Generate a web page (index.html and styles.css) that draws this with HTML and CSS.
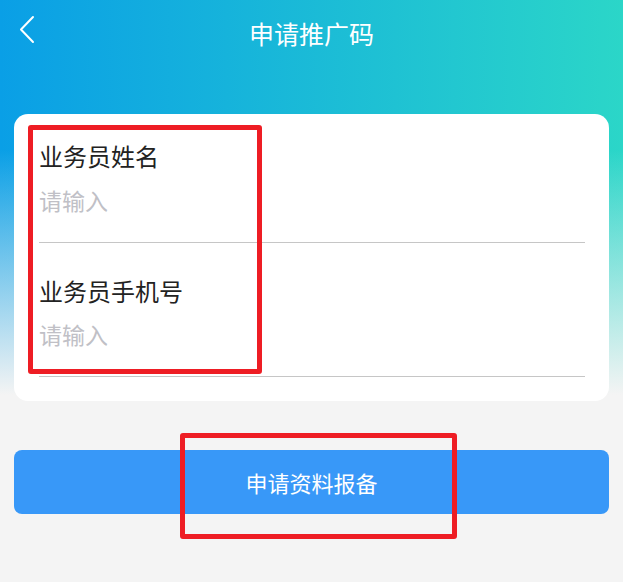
FILE: index.html
```html
<!DOCTYPE html>
<html>
   <head>
      <meta charset="utf-8">
      <meta name="viewport" content="width=device-width, initial-scale=1">
      <title>申请推广码</title>
      <link rel="stylesheet" href="styles.css">
   </head>
   <body>
      <div class="page">

         <!--
         Navigation bar
         -->
         <div class="navbar">
            <a class="back" href="#">
               <svg width="20" height="30" viewBox="0 0 20 30">
                  <path d="M15,2 L3,14.5 L15,27" />
               </svg>
            </a>
            <div class="title">申请推广码</div>
         </div>

         <!--
         Salesman form
         -->
         <form class="card">
            <div class="field">
               <label for="nameText">业务员姓名</label>
               <input type="text" id="nameText" placeholder="请输入">
            </div>
            <div class="field">
               <label for="phoneText">业务员手机号</label>
               <input type="tel" id="phoneText" placeholder="请输入">
            </div>
            <div class="mark mark-form"></div>
         </form>

         <!--
         Submit button
         -->
         <div class="actions">
            <button type="button" class="submit">申请资料报备</button>
            <div class="mark mark-button"></div>
         </div>

      </div>
   </body>
</html>
```

FILE: styles.css
```css
body {
   margin : 0;
   background-color : #f4f4f4;
   font-family : "Noto Sans CJK SC", "Noto Sans", sans-serif;
}

.page {
   min-height : 582px;
   background-color : #f4f4f4;
   background-image :
      linear-gradient(to bottom, rgba(244, 244, 244, 0) 150px, #f4f4f4 395px),
      linear-gradient(to right, #0a9fe6, #2bd6c8);
   background-size : 100% 400px;
   background-repeat : no-repeat;
   padding : 0 14px;
   overflow : hidden;
}

.navbar {
   position : relative;
   height : 64px;
   display : flex;
   align-items : center;
   justify-content : center;
}

.back {
   position : absolute;
   left : 4px;
   top : 15px;
   width : 20px;
   height : 30px;
}

.back svg {
   display : block;
}

.back path {
   fill : none;
   stroke : #ffffff;
   stroke-width : 2px;
   stroke-linecap : round;
   stroke-linejoin : round;
}

.title {
   color : #ffffff;
   font-size : 25px;
   line-height : 30px;
   padding-top : 2px;
}

.card {
   position : relative;
   margin : 50px 0 0 0;
   background-color : #ffffff;
   border-radius : 14px;
   padding : 0 24px 24px 25px;
}

.field {
   display : flex;
   flex-direction : column;
   padding : 33px 0 24px 0;
   border-bottom : 1px solid #c6c6c6;
}

.field:first-child {
   padding-top : 27px;
}

.field label {
   color : #222222;
   font-size : 24px;
   line-height : 30px;
}

.field input {
   margin-top : 14px;
   margin-bottom : 3px;
   border : none;
   outline : none;
   padding : 0;
   background : transparent;
   font-family : inherit;
   font-size : 23px;
   line-height : 30px;
   height : 30px;
   color : #222222;
}

.field + .field input {
   margin-top : 13px;
}

.field input::placeholder {
   color : #c0c0c6;
}

.actions {
   position : relative;
   margin-top : 49px;
}

.submit {
   display : block;
   width : 100%;
   height : 64px;
   border : none;
   border-radius : 8px;
   background-color : #3898f8;
   color : #ffffff;
   font-family : inherit;
   font-size : 22px;
}

/*
Red annotation frames
*/
.mark {
   position : absolute;
   border : 5px solid #ee1d24;
   border-radius : 3px;
}

.mark-form {
   left : 14px;
   top : 11px;
   width : 224px;
   height : 239px;
}

.mark-button {
   left : 166px;
   top : -17px;
   width : 267px;
   height : 96px;
}
```
